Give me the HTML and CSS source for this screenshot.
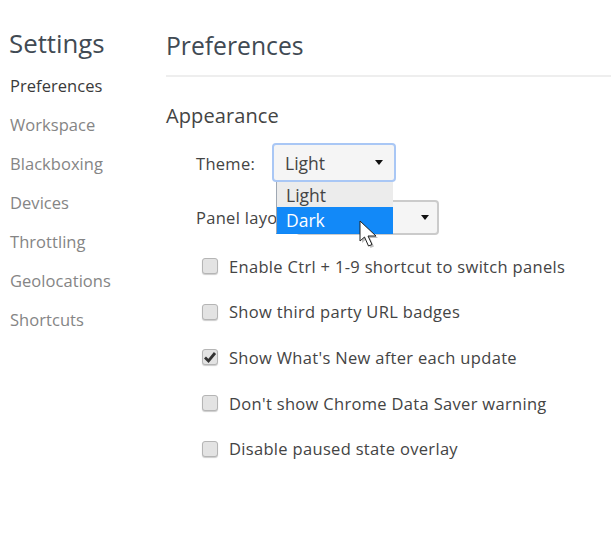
FILE: index.html
```html
<!DOCTYPE html>
<html lang="en">
<head>
  <meta charset="UTF-8" />
  <title>Settings</title>
  <link rel="stylesheet" href="styles.css">
</head>
<body>
  <div class="settings">
    <nav class="sidebar">
      <h1 class="sidebar-title">Settings</h1>
      <ul class="tabs">
        <li class="tab selected">Preferences</li>
        <li class="tab">Workspace</li>
        <li class="tab">Blackboxing</li>
        <li class="tab">Devices</li>
        <li class="tab">Throttling</li>
        <li class="tab">Geolocations</li>
        <li class="tab">Shortcuts</li>
      </ul>
    </nav>

    <main class="content">
      <h2 class="content-title">Preferences</h2>
      <h3 class="section-title">Appearance</h3>

      <div class="field field-theme">
        <span class="field-label label-theme">Theme:</span>
        <div class="select select-theme">
          <span>Light</span>
          <span class="caret"></span>
          <ul class="popup">
            <li class="popup-item">Light</li>
            <li class="popup-item active">Dark</li>
          </ul>
          <svg class="cursor" width="24" height="30" viewBox="0 0 24 30">
            <path class="cursor-shadow" d="M3 3v20l4.500-4 4 9 3.500-1.500-4-8.500h8z" />
            <path class="cursor-arrow" d="M1 1v20l4.500-4 4 9 3.500-1.500-4-8.500h8z" />
          </svg>
        </div>
      </div>

      <div class="field field-panel">
        <span class="field-label label-panel">Panel layout:</span>
        <div class="select select-panel">
          <span class="caret"></span>
        </div>
      </div>

      <ul class="options">
        <li class="option"><span class="checkbox"></span>Enable Ctrl + 1-9 shortcut to switch panels</li>
        <li class="option"><span class="checkbox"></span>Show third party URL badges</li>
        <li class="option">
          <span class="checkbox">
            <svg class="tick" width="14" height="14" viewBox="0 0 14 14"><path d="M2 7.500l3.500 3.500 6.500-8" /></svg>
          </span>Show What's New after each update
        </li>
        <li class="option"><span class="checkbox"></span>Don't show Chrome Data Saver warning</li>
        <li class="option"><span class="checkbox"></span>Disable paused state overlay</li>
      </ul>
    </main>
  </div>
</body>
</html>
```

FILE: styles.css
```css
* {
  box-sizing: border-box;
}

body {
  margin: 0;
  background-color: white;
  font-family: 'Open Sans', 'Noto Sans', sans-serif;
  color: #3c4043;
  overflow: hidden;
}

h1, h2, h3, ul {
  margin: 0;
  padding: 0;
  font-weight: normal;
  list-style: none;
}

.settings {
  display: flex;
  height: 536px;
}

.sidebar {
  width: 166px;
  flex-shrink: 0;
  padding: 25px 0 0 9px;
}

.sidebar-title {
  font-size: 25.800px;
  line-height: 36px;
  color: #414a53;
}

.tabs {
  margin-top: 5px;
  padding-left: 1px;
}

.tab {
  font-size: 16.500px;
  line-height: 39px;
  letter-spacing: 0.05px;
  color: #858585;
}

.tab.selected {
  color: #3a3a3a;
}

.content {
  flex: 1;
  min-width: 0;
}

.content-title {
  height: 50px;
  margin-top: 27px;
  font-size: 24.700px;
  line-height: 38px;
  color: #414a53;
  border-bottom: 2px solid #eeeeee;
}

.section-title {
  margin-top: 24px;
  font-size: 20px;
  line-height: 30px;
  letter-spacing: 0.1px;
  color: #444;
}

.field {
  display: flex;
  align-items: center;
  padding-left: 30px;
  font-size: 16.500px;
  letter-spacing: 0.3px;
  color: #444;
}

.field-theme {
  margin-top: 12px;
}

.field-panel {
  margin-top: 18px;
}

.field-label {
  flex-shrink: 0;
  white-space: nowrap;
}

.label-theme {
  width: 76px;
  padding-top: 1px;
}

.label-panel {
  width: 100px;
}

.select {
  position: relative;
  display: flex;
  align-items: center;
  justify-content: space-between;
  background-color: #f5f5f5;
  border-radius: 4px;
}

.select-theme {
  width: 124px;
  height: 39px;
  padding: 1px 11px 0;
  border: 2px solid #a9c7f5;
  font-size: 17.500px;
  letter-spacing: 0;
}

.select-panel {
  justify-content: flex-end;
  width: 143px;
  height: 35px;
  padding: 0 8px 0 12px;
  border: 2px solid #cbcbcb;
}

.caret {
  width: 0;
  height: 0;
  margin-top: -1px;
  border-left: 4.500px solid transparent;
  border-right: 4.500px solid transparent;
  border-top: 5px solid #111;
}

.popup {
  position: absolute;
  top: 37px;
  left: 2px;
  width: 117px;
  height: 52px;
  z-index: 10;
  background-color: #ececec;
  border-left: 1px solid #9fa8b3;
  border-bottom: 1px solid #0f86f5;
}

.popup-item {
  height: 25px;
  padding-left: 9px;
  font-size: 17.500px;
  line-height: 26px;
}

.popup-item.active {
  height: 26px;
  background-color: #1289f8;
  color: white;
}

.cursor {
  position: absolute;
  top: 75px;
  left: 85px;
  z-index: 11;
}

.cursor-shadow {
  fill: rgba(0, 0, 0, 0.25);
}

.cursor-arrow {
  fill: white;
  stroke: #222;
  stroke-width: 1;
}

.options {
  margin-top: 8.500px;
  padding-left: 36px;
}

.option {
  display: flex;
  align-items: center;
  height: 45.600px;
  font-size: 16.500px;
  letter-spacing: 0.32px;
  color: #444;
}

.checkbox {
  display: flex;
  align-items: center;
  justify-content: center;
  width: 16px;
  height: 16px;
  margin-right: 11px;
  flex-shrink: 0;
  background-color: #e3e3e3;
  border: 1px solid #b5b5b5;
  border-radius: 3px;
  box-shadow: 0 1px 1px rgba(0, 0, 0, 0.2);
}

.tick path {
  fill: none;
  stroke: #333;
  stroke-width: 2.800;
}
```
